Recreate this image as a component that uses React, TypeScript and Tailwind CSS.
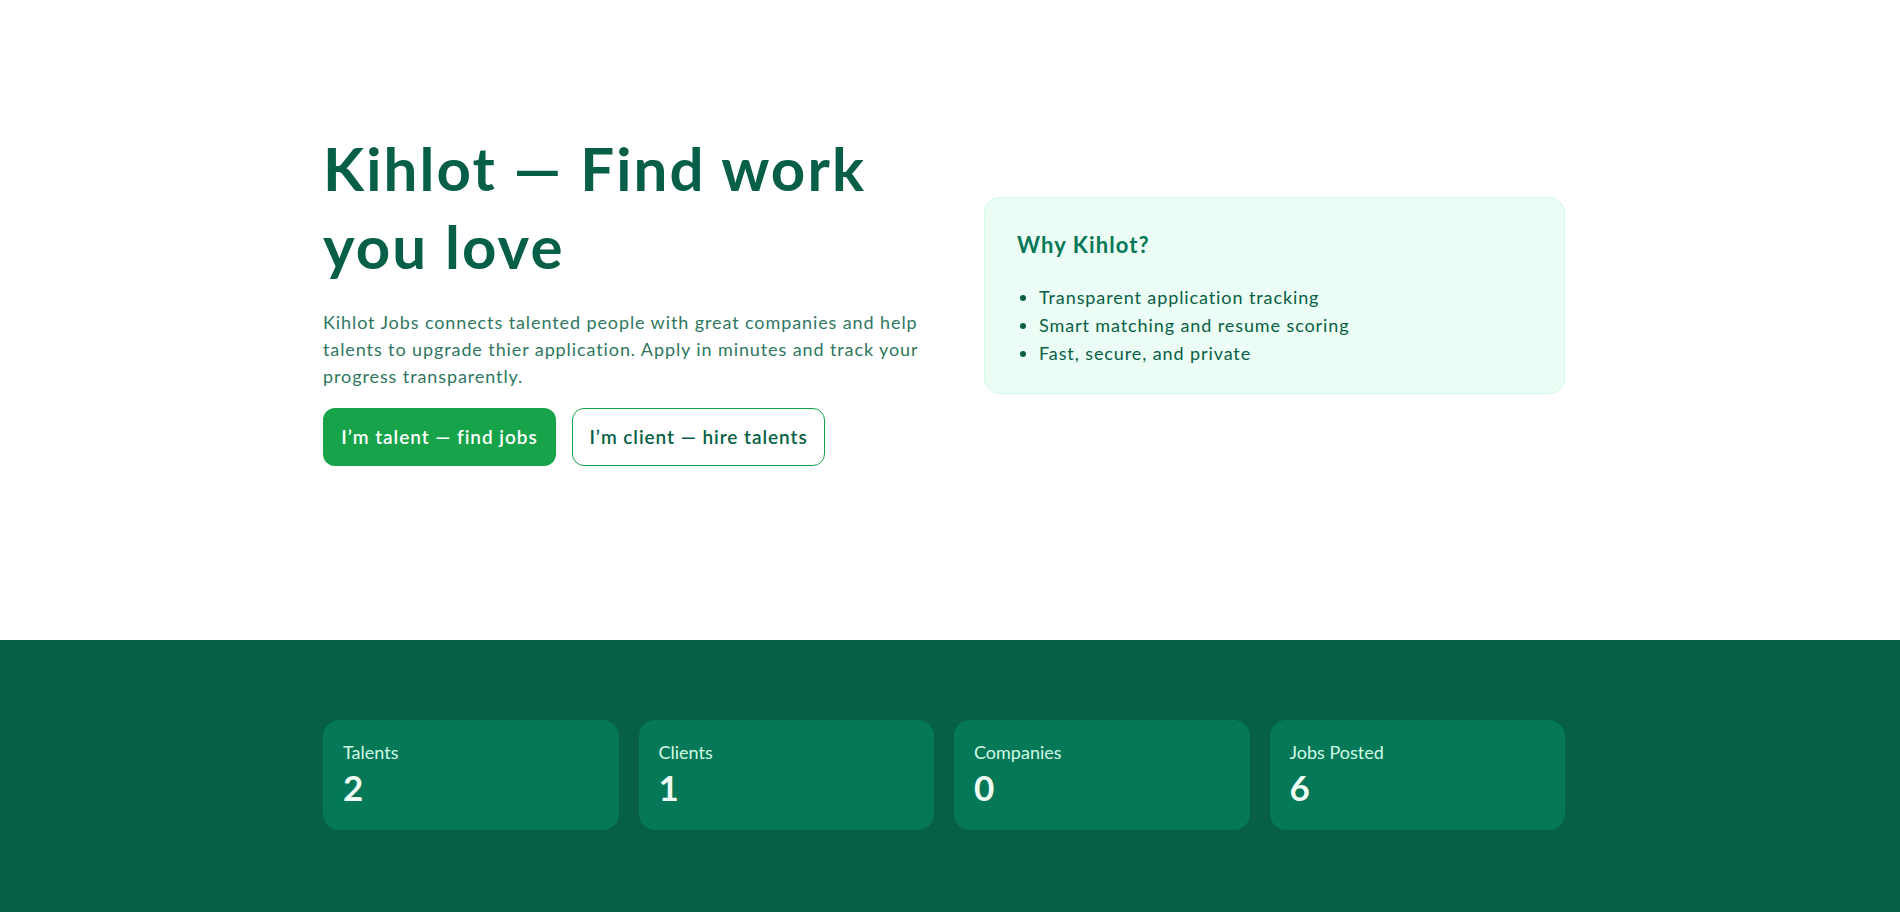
import React from "react";

const stats = [
  { label: "Talents", value: "2" },
  { label: "Clients", value: "1" },
  { label: "Companies", value: "0" },
  { label: "Jobs Posted", value: "6" },
];

export default function App() {
  return (
    <div className="min-h-[912px] bg-white font-['Lato',_'Liberation_Sans',_sans-serif]">
      <section className="h-[640px] bg-white pt-[129px]">
        <div className="ml-[323px] w-[1242px] grid grid-cols-[621px_581px] gap-10 items-center">
          <div>
            <h1 className="text-[60px] leading-[78px] font-bold tracking-[0.035em] text-[#065f46]">
              Kihlot — Find work
              <br />
              you love
            </h1>
            <p className="mt-[24px] text-[18px] leading-[27px] tracking-[0.05em] text-[#2f7762] whitespace-nowrap">
              Kihlot Jobs connects talented people with great companies and help
              <br />
              talents to upgrade thier application. Apply in minutes and track your
              <br />
              progress transparently.
            </p>
            <div className="mt-[18px] flex gap-4">
              <button className="w-[233px] h-[58px] rounded-xl bg-[#17a34a] text-white text-[19px] tracking-[0.05em] font-semibold">
                I’m talent — find jobs
              </button>
              <button className="w-[253px] h-[58px] rounded-xl border border-[#16a34a] bg-white text-[#065f46] text-[19px] tracking-[0.05em] font-semibold">
                I’m client — hire talents
              </button>
            </div>
          </div>
          <div className="mb-[5px] rounded-2xl border border-[#d1fae5] bg-[#ecfdf5] px-8 pt-8 pb-[26px]">
            <h2 className="text-[22px] leading-[30px] font-bold tracking-[0.05em] text-[#047857]">
              Why Kihlot?
            </h2>
            <ul className="mt-[23px] list-disc pl-[22px] text-[18px] leading-[28px] tracking-[0.05em] text-[#065f46]">
              <li>Transparent application tracking</li>
              <li>Smart matching and resume scoring</li>
              <li>Fast, secure, and private</li>
            </ul>
          </div>
        </div>
      </section>
      <section className="bg-[#065f46] pt-20 pb-[82px]">
        <div className="ml-[323px] w-[1242px] grid grid-cols-4 gap-5">
          {stats.map((s) => (
            <div key={s.label} className="rounded-2xl bg-[#047857] p-5">
              <div className="text-[18px] leading-6 text-[#d1fae5]">{s.label}</div>
              <div className="text-[35px] leading-[46px] font-bold text-[#f0fdf4]">
                {s.value}
              </div>
            </div>
          ))}
        </div>
      </section>
    </div>
  );
}
